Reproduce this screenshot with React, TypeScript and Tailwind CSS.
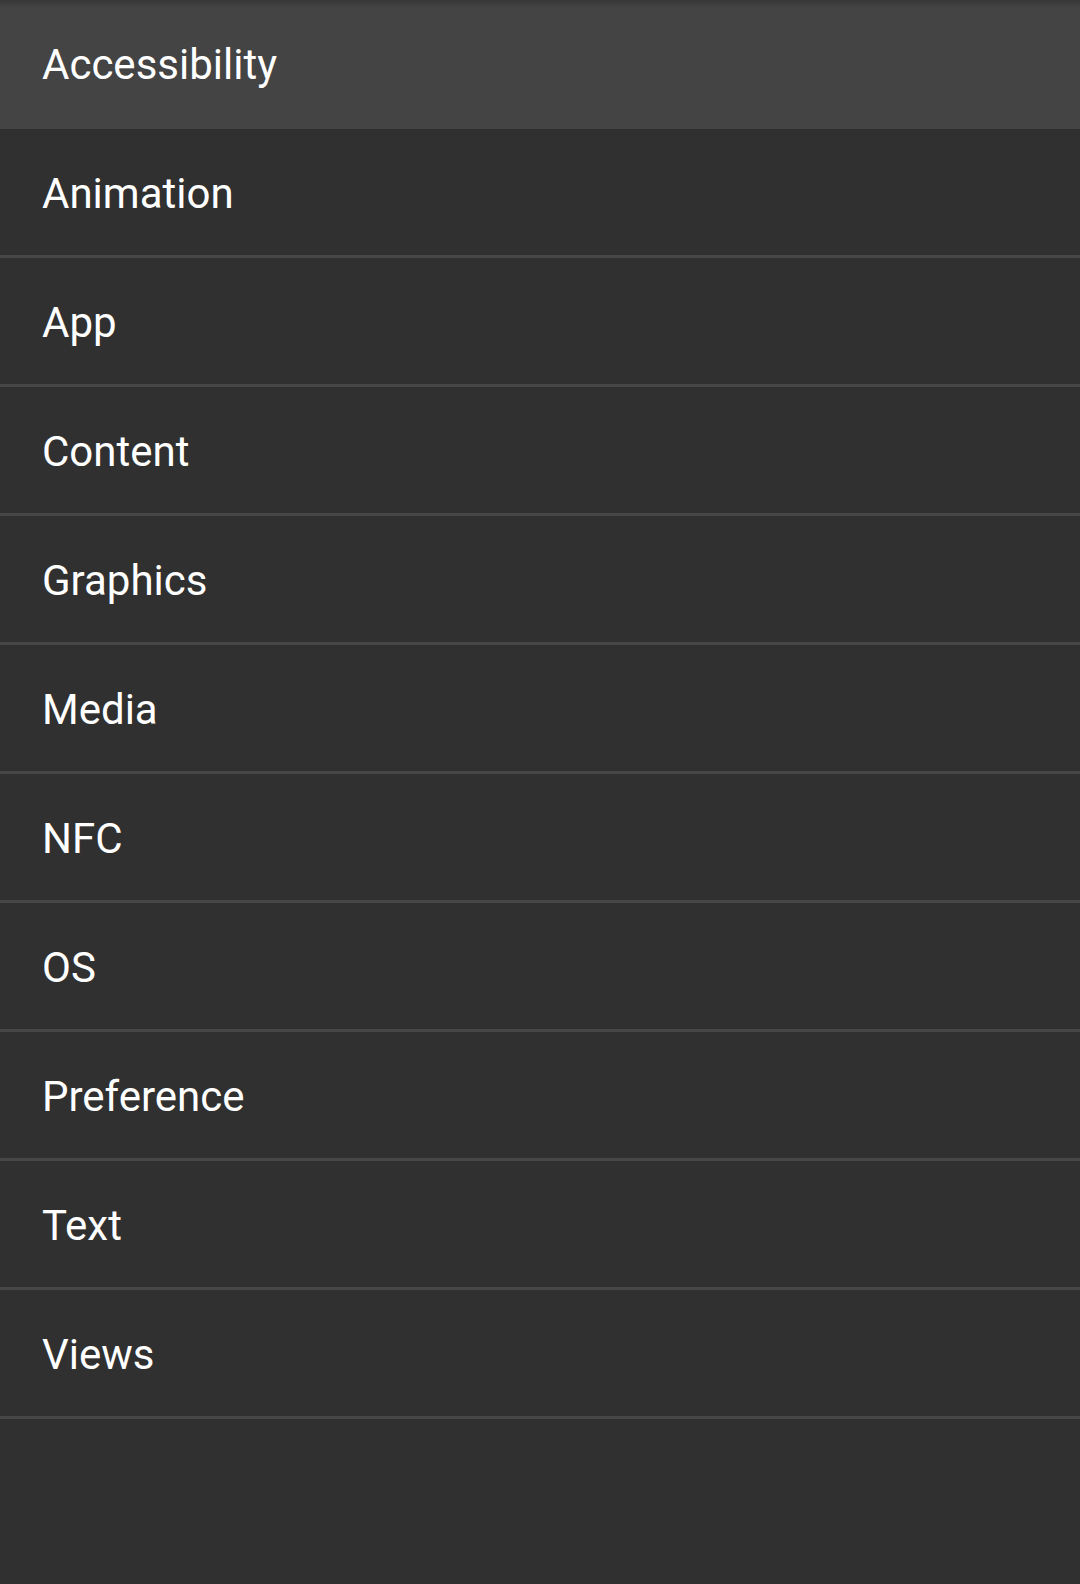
const items = [
  "Accessibility",
  "Animation",
  "App",
  "Content",
  "Graphics",
  "Media",
  "NFC",
  "OS",
  "Preference",
  "Text",
  "Views",
];

export default function App() {
  return (
    <div className="relative w-[1080px] h-[1584px] bg-[#303030] overflow-hidden" style={{ fontFamily: "Roboto, 'Noto Sans', sans-serif" }}>
      {/* top shadow under the action bar */}
      <div className="absolute top-0 left-0 right-0 h-[8px] bg-gradient-to-b from-black/20 to-transparent z-10" />
      <ul className="flex flex-col">
        {items.map((name, i) => (
          <li
            key={name}
            className={
              i === 0
                ? "h-[129px] bg-[#444444] flex items-start"
                : "h-[129px] border-b-[3px] border-[#474747] flex items-start"
            }
          >
            <span className="h-[126px] flex items-center pl-[42px] text-[42px] text-white leading-none pt-[3px]">
              {name}
            </span>
          </li>
        ))}
      </ul>
    </div>
  );
}
